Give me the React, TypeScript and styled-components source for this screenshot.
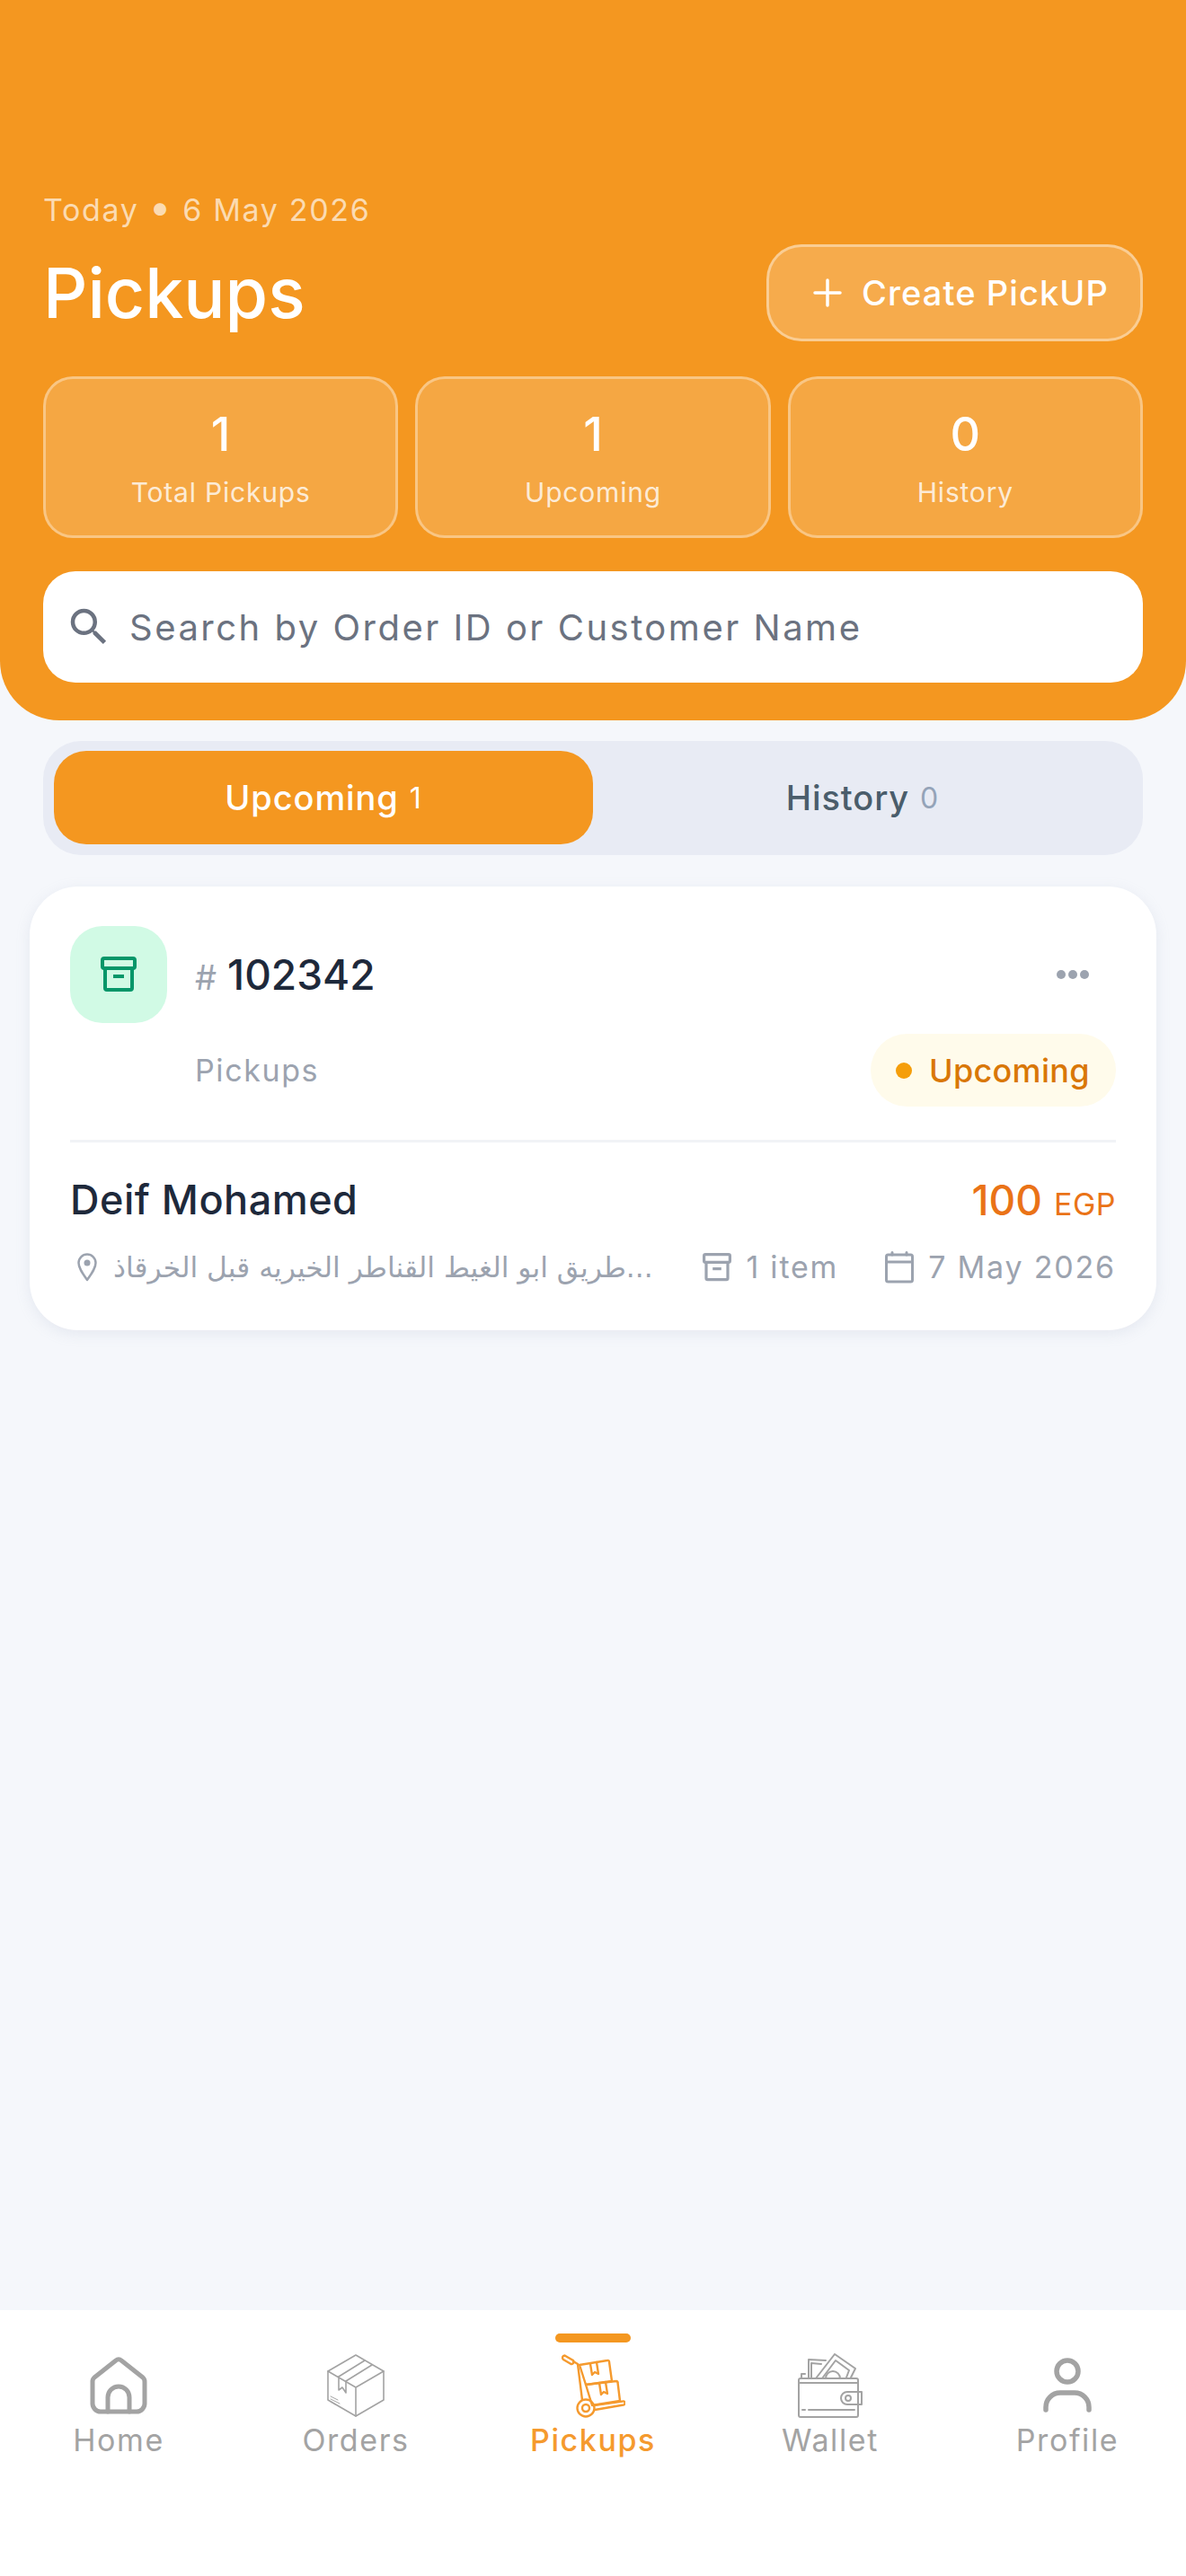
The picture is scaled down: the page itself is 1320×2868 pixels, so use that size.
import React from 'react'
import styled, { createGlobalStyle } from 'styled-components'
import { MdSearch } from 'react-icons/md'

const GlobalStyle = createGlobalStyle`
  * { box-sizing: border-box; }
  html, body { margin: 0; padding: 0; background: #f5f7fb; }
  body { font-family: Inter, "Noto Sans", sans-serif; }
`

const Page = styled.div`
  width: 1320px;
  height: 2868px;
  display: flex;
  flex-direction: column;
  overflow: hidden;
  background: #f5f7fb;
`
const Main = styled.main`
  flex: 1;
  display: flex;
  flex-direction: column;
`
const Header = styled.header`
  height: 802px;
  padding: 210px 48px 0;
  background: #f49720;
  border-radius: 0 0 66px 66px;
`
const DateLine = styled.div`
  height: 48px;
  font-size: 34px;
  line-height: 48px;
  letter-spacing: 1.65px;
  color: rgba(255, 255, 255, 0.66);
`
const Bullet = styled.span`
  font-size: 44px;
  line-height: 0;
`
const TitleRow = styled.div`
  margin-top: 14px;
  height: 108px;
  display: flex;
  align-items: center;
  justify-content: space-between;
`
const Title = styled.h1`
  margin: 0;
  font-size: 77px;
  font-weight: 500;
  line-height: 90px;
  color: #fff;
`
const CreateButton = styled.button`
  width: 419px;
  height: 108px;
  display: flex;
  align-items: center;
  justify-content: center;
  gap: 22px;
  padding: 0 0 0 14px;
  border: 3px solid rgba(255, 255, 255, 0.4);
  border-radius: 39px;
  background: rgba(255, 255, 255, 0.2);
  color: #fff;
  font-family: inherit;
  font-size: 38px;
  font-weight: 500;
  letter-spacing: 1.1px;
`
const Stats = styled.div`
  margin-top: 39px;
  display: grid;
  grid-template-columns: repeat(3, 1fr);
  gap: 19px;
`
const Stat = styled.div`
  height: 180px;
  display: flex;
  flex-direction: column;
  align-items: center;
  border: 3px solid rgba(255, 255, 255, 0.35);
  border-radius: 33px;
  background: rgba(255, 255, 255, 0.16);
  color: #fff;
`
const StatValue = styled.div`
  margin-top: 32px;
  font-size: 52px;
  font-weight: 500;
  line-height: 60px;
`
const StatLabel = styled.div`
  margin-top: 14px;
  font-size: 30px;
  line-height: 40px;
  letter-spacing: 0.8px;
  color: rgba(255, 255, 255, 0.8);
`
const Search = styled.div`
  margin-top: 37px;
  height: 124px;
  display: flex;
  align-items: center;
  gap: 18px;
  padding-left: 24px;
  border-radius: 36px;
  background: #fff;
  font-size: 40px;
  letter-spacing: 2.5px;
  color: #6b7280;
`
const Tabs = styled.div`
  margin: 23px 48px 0;
  height: 127px;
  display: grid;
  grid-template-columns: 600px 1fr;
  padding: 11px 12px 12px;
  border-radius: 42px;
  background: #e8ebf4;
`
const Tab = styled.div<{ $active?: boolean }>`
  display: flex;
  align-items: center;
  justify-content: center;
  gap: 12px;
  border-radius: 36px;
  font-size: 38px;
  font-weight: 500;
  letter-spacing: 0.9px;
  background: ${p => (p.$active ? '#f49720' : 'transparent')};
  color: ${p => (p.$active ? '#fff' : '#4a5d6b')};
`
const TabCount = styled.span<{ $active?: boolean }>`
  font-size: 32px;
  font-weight: 400;
  color: ${p => (p.$active ? '#fff' : '#94a3b8')};
`
const Card = styled.article`
  margin: 35px 33px 0;
  height: 494px;
  padding: 44px 45px 0;
  border-radius: 54px;
  background: #fff;
  box-shadow: 0 4px 16px rgba(148, 163, 184, 0.16);
`
const TopRow = styled.div`
  display: flex;
  align-items: center;
  gap: 31px;
`
const IconTile = styled.div`
  width: 108px;
  height: 108px;
  display: flex;
  align-items: center;
  justify-content: center;
  border-radius: 36px;
  background: #d1fae5;
  color: #059669;
`
const OrderNo = styled.div`
  flex: 1;
  display: flex;
  align-items: baseline;
  gap: 12px;
  font-size: 46px;
  font-weight: 500;
  color: #1e293b;
`
const Hash = styled.span`
  font-size: 38px;
  font-weight: 400;
  color: #9ca3af;
`
const Dots = styled.svg`
  display: block;
  margin-right: 30px;
`
const SubRow = styled.div`
  margin-top: 12px;
  padding-left: 139px;
  display: flex;
  align-items: center;
  justify-content: space-between;
`
const SubLabel = styled.span`
  font-size: 34px;
  letter-spacing: 1.6px;
  color: #9ca3af;
`
const Badge = styled.span`
  height: 81px;
  width: 273px;
  display: flex;
  align-items: center;
  gap: 19px;
  padding-left: 28px;
  border-radius: 41px;
  background: #fffbeb;
  font-size: 36px;
  font-weight: 500;
  letter-spacing: 0.3px;
  color: #d97706;
`
const BadgeDot = styled.i`
  width: 18px;
  height: 18px;
  border-radius: 50%;
  background: #f59e0b;
`
const Divider = styled.hr`
  margin: 37px 0 0;
  height: 3px;
  border: 0;
  background: #f1f3f6;
`
const NameRow = styled.div`
  margin-top: 36px;
  display: flex;
  align-items: center;
  justify-content: space-between;
`
const Name = styled.div`
  font-size: 45px;
  font-weight: 500;
  letter-spacing: 0.5px;
  line-height: 56px;
  color: #1e293b;
`
const Price = styled.div`
  display: flex;
  align-items: baseline;
  gap: 13px;
  font-size: 46px;
  font-weight: 500;
  color: #ea7317;
`
const Currency = styled.span`
  font-size: 34px;
  font-weight: 400;
  letter-spacing: 0.5px;
`
const Meta = styled.div`
  margin-top: 25px;
  display: flex;
  align-items: center;
  justify-content: space-between;
  font-size: 34px;
  line-height: 44px;
  letter-spacing: 1.8px;
  color: #9ca3af;
`
const MetaItem = styled.span`
  display: flex;
  align-items: center;
  gap: 16px;
  svg { flex: none; }
`
const Address = styled(MetaItem)`
  padding-left: 8px;
  gap: 18px;
  font-family: "DejaVu Sans", sans-serif;
  font-size: 31.3px;
  letter-spacing: 0;
  white-space: nowrap;
`
const MetaRight = styled.span`
  display: flex;
  gap: 52px;
`
const Nav = styled.nav`
  height: 296px;
  padding-top: 26px;
  display: grid;
  grid-template-columns: repeat(5, 1fr);
  align-items: start;
  background: #fff;
`
const NavItem = styled.div<{ $active?: boolean }>`
  display: flex;
  flex-direction: column;
  align-items: center;
  color: ${p => (p.$active ? '#f59a2e' : '#a3a3a3')};
`
const NavBar = styled.div<{ $active?: boolean }>`
  width: 84px;
  height: 10px;
  border-radius: 5px;
  background: ${p => (p.$active ? '#f49720' : 'transparent')};
`
const NavIcon = styled.svg`
  display: block;
  margin-top: 12px;
  fill: none;
  stroke: currentColor;
  stroke-linecap: round;
  stroke-linejoin: round;
`
const NavLabel = styled.span<{ $active?: boolean }>`
  margin-top: 4px;
  font-size: 34px;
  line-height: 42px;
  letter-spacing: 1.6px;
  font-weight: ${p => (p.$active ? 500 : 400)};
`

function ArchiveIcon({ size }: { size: number }) {
  return (
    <svg width={size} height={size} viewBox="0 0 20 20" fill="none" stroke="currentColor" strokeWidth="2" strokeLinejoin="round">
      <rect x="1" y="1" width="18" height="5.5" rx="1" />
      <path d="M2.5 6.5V17.5a1 1 0 0 0 1 1h13a1 1 0 0 0 1-1V6.5" />
      <path d="M7 11h6" />
    </svg>
  )
}

function HomeIcon() {
  return (
    <NavIcon width="72" height="72" viewBox="0 0 72 72" strokeWidth="5">
      <path d="M33 8a4.500 4.500 0 0 1 6 0L63 27a6 6 0 0 1 2 5V56a9 9 0 0 1-9 9H16a9 9 0 0 1-9-9V32a6 6 0 0 1 2-5Z" />
      <path d="M24 65V49a12 12 0 0 1 24 0V65" />
    </NavIcon>
  )
}

function BoxIcon() {
  return (
    <NavIcon width="72" height="72" viewBox="0 0 72 72" strokeWidth="1.6">
      <path d="M36 2 67 20V52L36 70 5 52V20Z" />
      <path d="M5 20 36 38 67 20M36 38V70" />
      <path d="M17 26 46 8M25 31 54 13" />
      <path d="M17 26V41L21 38 25 44V31" />
      <path d="M8 48l8 4M8 51l10 5M8 54l5 3" strokeWidth="1" />
    </NavIcon>
  )
}

function TrolleyIcon() {
  return (
    <NavIcon width="72" height="72" viewBox="0 0 72 72" strokeWidth="2.4">
      <path d="M4.500 2.500 14 8a2.500 2.500 0 0 1-2.500 4L3 7a2.500 2.500 0 0 1 1.500-4.500Z" />
      <path d="M14 9 19 12 24 52" />
      <circle cx="28" cy="61" r="9.500" />
      <circle cx="28" cy="61" r="4" />
      <path d="M37 58 69 53.500a2 2 0 0 1 1 4L38 63" />
      <path d="M21 13 52 8a1.500 1.500 0 0 1 2 1.500L57 31 28 35Z" />
      <path d="M28 35 62 31a1.500 1.500 0 0 1 1.500 1.500L66 53 35 58Z" />
      <path d="M33 12 35 24 38 21 42 23 40 10M43 33 45 46 48 43 52 45 50 32" />
    </NavIcon>
  )
}

function WalletIcon() {
  return (
    <NavIcon width="72" height="72" viewBox="0 0 72 72" strokeWidth="2">
      <path d="M3 28H65a2 2 0 0 1 2 2V69a2 2 0 0 1-2 2H3a2 2 0 0 1-2-2V30a2 2 0 0 1 2-2Z" />
      <path d="M1 33H67M5 63H8M12 63H63" />
      <path d="M67 43H71V57H55a7 7 0 0 1 0-14Z" />
      <circle cx="56" cy="50" r="3" />
      <path d="M4 28V23H8M12 28V7L31 8M15 28V11L26 12" />
      <path d="M20 28 41 1 64 17 59 27M27 28 42 8 57 19 54 27" />
      <path d="M31 28a8 8 0 0 1 16 0" />
    </NavIcon>
  )
}

function ProfileIcon() {
  return (
    <NavIcon width="72" height="72" viewBox="0 0 72 72" strokeWidth="5.500">
      <circle cx="36" cy="20" r="12" />
      <path d="M12 63V60A16 16 0 0 1 28 44H44A16 16 0 0 1 60 60V63" />
    </NavIcon>
  )
}

export default function App() {
  return (
    <Page>
      <GlobalStyle />
      <Main>
        <Header>
          <DateLine>Today <Bullet>•</Bullet> 6 May 2026</DateLine>
          <TitleRow>
            <Title>Pickups</Title>
            <CreateButton>
              <svg width="32" height="32" viewBox="0 0 32 32" stroke="currentColor" strokeWidth="3.500" strokeLinecap="round">
                <path d="M16 2V30M2 16H30" />
              </svg>
              Create PickUP
            </CreateButton>
          </TitleRow>
          <Stats>
            <Stat>
              <StatValue>1</StatValue>
              <StatLabel>Total Pickups</StatLabel>
            </Stat>
            <Stat>
              <StatValue>1</StatValue>
              <StatLabel>Upcoming</StatLabel>
            </Stat>
            <Stat>
              <StatValue>0</StatValue>
              <StatLabel>History</StatLabel>
            </Stat>
          </Stats>
          <Search>
            <MdSearch size={54} />
            Search by Order ID or Customer Name
          </Search>
        </Header>

        <Tabs>
          <Tab $active>
            Upcoming <TabCount $active>1</TabCount>
          </Tab>
          <Tab>
            History <TabCount>0</TabCount>
          </Tab>
        </Tabs>

        <Card>
          <TopRow>
            <IconTile>
              <ArchiveIcon size={40} />
            </IconTile>
            <OrderNo>
              <Hash>#</Hash>102342
            </OrderNo>
            <Dots width="36" height="10" viewBox="0 0 36 10" fill="#9ca3af">
              <circle cx="5" cy="5" r="5" />
              <circle cx="18" cy="5" r="5" />
              <circle cx="31" cy="5" r="5" />
            </Dots>
          </TopRow>
          <SubRow>
            <SubLabel>Pickups</SubLabel>
            <Badge>
              <BadgeDot />
              Upcoming
            </Badge>
          </SubRow>
          <Divider />
          <NameRow>
            <Name>Deif Mohamed</Name>
            <Price>
              100 <Currency>EGP</Currency>
            </Price>
          </NameRow>
          <Meta>
            <Address>
              <svg width="22" height="32" viewBox="0 0 22 32" fill="none" stroke="currentColor" strokeWidth="2.500" strokeLinejoin="round">
                <path d="M11 30C6 23 1.500 17 1.500 11a9.500 9.500 0 0 1 19 0C20.500 17 16 23 11 30Z" />
                <circle cx="11" cy="11" r="3.500" fill="currentColor" stroke="none" />
              </svg>
              <span dir="ltr">طريق ابو الغيط القناطر الخيريه قبل الخرقاذ...</span>
            </Address>
            <MetaRight>
              <MetaItem>
                <ArchiveIcon size={32} />
                1 item
              </MetaItem>
              <MetaItem>
                <svg width="32" height="36" viewBox="0 0 32 36" fill="none" stroke="currentColor" strokeWidth="3" strokeLinejoin="round" strokeLinecap="round">
                  <rect x="1.500" y="4" width="29" height="30" rx="2" />
                  <path d="M1.500 12H30.500M8 1.500V4M24 1.500V4" />
                </svg>
                7 May 2026
              </MetaItem>
            </MetaRight>
          </Meta>
        </Card>
      </Main>

      <Nav>
        <NavItem>
          <NavBar />
          <HomeIcon />
          <NavLabel>Home</NavLabel>
        </NavItem>
        <NavItem>
          <NavBar />
          <BoxIcon />
          <NavLabel>Orders</NavLabel>
        </NavItem>
        <NavItem $active>
          <NavBar $active />
          <TrolleyIcon />
          <NavLabel $active>Pickups</NavLabel>
        </NavItem>
        <NavItem>
          <NavBar />
          <WalletIcon />
          <NavLabel>Wallet</NavLabel>
        </NavItem>
        <NavItem>
          <NavBar />
          <ProfileIcon />
          <NavLabel>Profile</NavLabel>
        </NavItem>
      </Nav>
    </Page>
  )
}
